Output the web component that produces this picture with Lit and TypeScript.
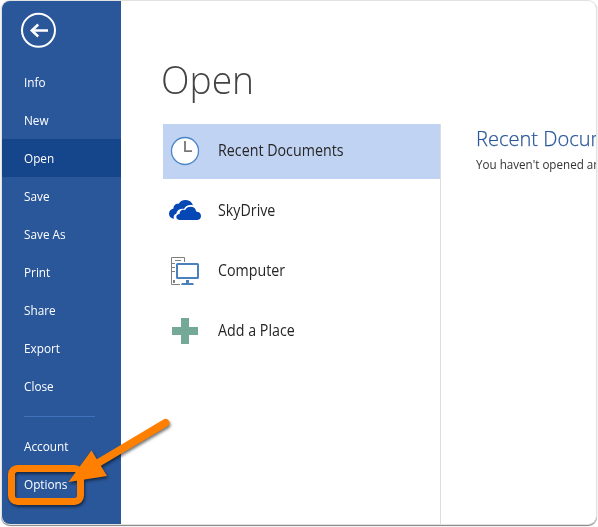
import { LitElement, html, css, svg } from "lit";
import { customElement } from "lit/decorators.js";
import { classMap } from "lit/directives/class-map.js";

const mainItems = ["Info", "New", "Open", "Save", "Save As", "Print", "Share", "Export", "Close"];

const clock = svg`<circle cx="16" cy="16" r="13.5" fill="#fff" stroke="#4a86c5" stroke-width="1.3"/>
  <path d="M16 6V16.2H23" fill="none" stroke="#777" stroke-width="1.8"/>`;
const cloud = svg`<path d="M5 23.8C2 23.5 0 21.7 0 18.8C0 16 2 14 4.5 13.5C4.4 10.2 7 8.3 9.7 8.8C11.5 5.5 14.4 4.8 17 5C20.5 5.2 23 7.3 24 10.4C20 9.3 16.5 10.8 15 13.9C10.6 13.5 7.8 15.6 7.2 18.7C4.8 19.2 4.2 21.6 5 23.8Z" fill="#0547b5"/>
  <path d="M11 25C8.7 25 7.3 23.6 7.3 22C7.3 20.2 8.7 19 10.6 18.9C10.3 16 13.4 14 16 15.2C18 10.7 26.3 10.4 27.2 16.5C30.2 16.7 32 18.4 32 21C32 23.5 30.2 25 28 25Z" fill="#0547b5"/>`;
const computer = svg`<path d="M15.5 7V2.5H2.5V29.5H11M6 5.5H12M3 8.5H6M3 12.5H6M3 16.5H6" fill="none" stroke="#808080" stroke-width="1"/>
  <rect x="4" y="25" width="2" height="3" fill="#808080"/>
  <rect x="8" y="9" width="21" height="14" rx=".6" fill="#fff" stroke="#4a80bc" stroke-width="2"/>
  <path d="M17 25H20V28H24L25 30H12L13 28H17Z" fill="#4a80bc"/>`;
const plus = svg`<path d="M12 3H20V12H29V20H20V29H12V20H3V12H12Z" fill="#74a998"/>`;

const places = [
  { label: "Recent Documents", icon: clock, active: true },
  { label: "SkyDrive", icon: cloud, active: false },
  { label: "Computer", icon: computer, active: false },
  { label: "Add a Place", icon: plus, active: false },
];

@customElement("app-root")
export class AppRoot extends LitElement {
  static styles = css`
    :host { display: block; position: relative; width: 598px; height: 527px; overflow: hidden; box-sizing: border-box; padding: 1px 2px 3px 2px; background: #fff; color: #262626; font-family: "Open Sans", "Noto Sans", sans-serif; white-space: nowrap; }
    .window { display: flex; height: 523px; width: 594px; border-radius: 8px; overflow: hidden; background: #fff; }
    .frame { border-radius: 8px; width: 594px; height: 523px; box-shadow: 0 0 0 1px #e2e2e2, 0 1px 1px 1px #808080; }
    .side { width: 119px; flex: none; background: #2a579a; color: #fff; }
    .back { display: block; width: 36px; height: 36px; margin: 11px 0 15px 18px; }
    .item { height: 38px; line-height: 40px; padding-left: 22px; font-size: 12.4px; font-weight: 450; }
    .item span { display: inline-block; transform: scaleX(.95); transform-origin: left; }
    .item.active { background: #15458a; }
    .rule { height: 1px; width: 71px; margin: 11px 0 10px 22px; background: #4173bd; }
    .places { width: 277px; margin-left: 42px; flex: none; display: flex; flex-direction: column; }
    h1 { margin: 0 0 0 -2px; padding-top: 50px; height: 73px; line-height: 56px; font-size: 39px; font-weight: 300; color: #444; box-sizing: content-box; transform: scaleX(.955); transform-origin: left; }
    .list { flex: 1; border-right: 1px solid #ddd; margin-right: -1px; }
    .place { height: 55px; margin-bottom: 5px; display: flex; align-items: center; padding-left: 6px; font-size: 15.5px; }
    .place.active { background: #c1d3f3; }
    .place svg { width: 32px; height: 32px; margin: -1px 17px 0 0; flex: none; }
    .place span { margin-top: -3px; transform: scaleX(.92); transform-origin: left; }
    .recent { padding: 123px 0 0 36px; flex: 1; min-width: 0; overflow: hidden; }
    h2 { margin: 0; font-size: 21px; font-weight: 350; line-height: 28px; color: #2a579a; transform: scaleX(.955); transform-origin: left; -webkit-text-stroke: .25px #2a579a; }
    .recent p { margin: 4px 0 0; font-size: 12.3px; line-height: 18px; color: #333; transform: scaleX(.945); transform-origin: left; }
    .callout { position: absolute; left: 0; top: 400px; width: 190px; height: 127px; filter: drop-shadow(1px 2px 1.5px rgba(0, 0, 0, .55)); }
  `;

  render() {
    return html`
      <div class="frame"><div class="window">
        <nav class="side">
          <svg class="back" viewBox="0 0 36 36" fill="none" stroke="#fff">
            <circle cx="18.5" cy="18.3" r="16.5" stroke-width="2"/>
            <path d="M28 18.5H12" stroke-width="2.5"/>
            <path d="M18.2 12.5L11.8 18.5L18.2 24.5" stroke-width="2.5"/>
          </svg>
          ${mainItems.map((label) => html`<div class=${classMap({ item: true, active: label === "Open" })}><span>${label}</span></div>`)}
          <div class="rule"></div>
          <div class="item"><span>Account</span></div>
          <div class="item"><span>Options</span></div>
        </nav>
        <section class="places">
          <h1>Open</h1>
          <div class="list">
            ${places.map((p) => html`<div class=${classMap({ place: true, active: p.active })}>
              <svg viewBox="0 0 32 32">${p.icon}</svg><span>${p.label}</span>
            </div>`)}
          </div>
        </section>
        <section class="recent">
          <h2>Recent Documents</h2>
          <p>You haven't opened any documents recently.</p>
        </section>
      </div></div>
      <svg class="callout" viewBox="0 0 190 127">
        <rect x="11.5" y="68.5" width="69" height="33" rx="6" fill="none" stroke="#ff8000" stroke-width="7"/>
        <path d="M165.5 22.8L98 63" stroke="#ff8000" stroke-width="7.8" stroke-linecap="round"/>
        <path d="M68.5 82L91.5 50.5L107 76Z" fill="#ff8000"/>
      </svg>`;
  }
}
